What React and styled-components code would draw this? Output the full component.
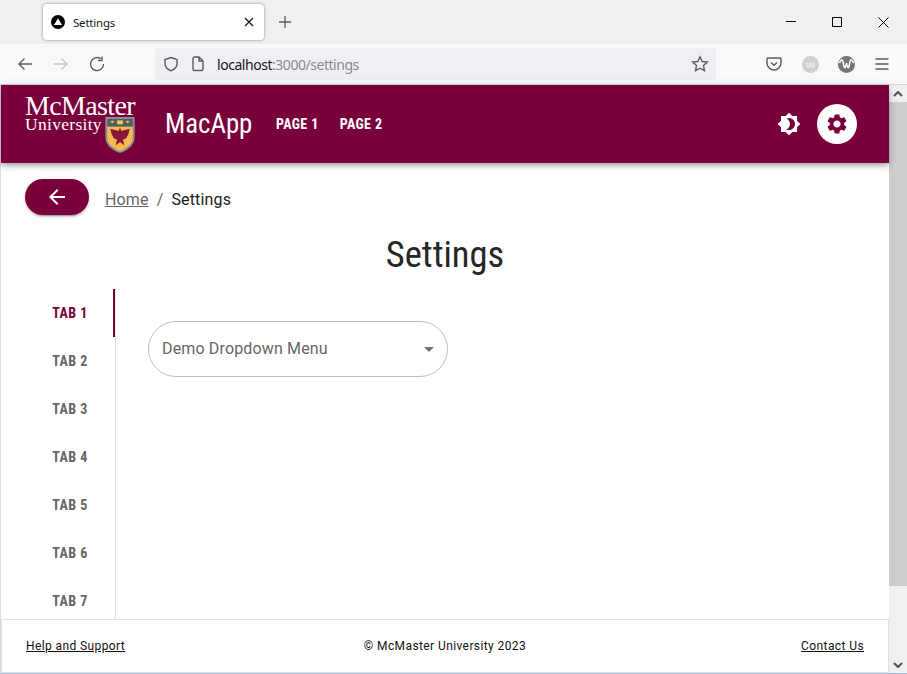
import React from 'react';
import styled, { createGlobalStyle } from 'styled-components';

const GlobalStyle = createGlobalStyle`
  html, body {
    margin: 0;
    padding: 0;
    background: #fff;
    overflow: hidden;
  }
  * {
    box-sizing: border-box;
  }
`;

const maroon = '#7a003c';

const Window = styled.div`
  width: 907px;
  height: 674px;
  display: flex;
  flex-direction: column;
  overflow: hidden;
  font-family: Roboto, "Liberation Sans", sans-serif;
`;

/* browser chrome */
const TabStrip = styled.div`
  height: 44px;
  flex: none;
  display: flex;
  align-items: flex-start;
  background: #f0f0f0;
  padding: 4px 0 0 43px;
`;

const BrowserTab = styled.div`
  width: 221px;
  height: 36px;
  display: flex;
  align-items: center;
  padding: 0 10px 0 8px;
  background: #fff;
  border-radius: 4px;
  box-shadow: 0 0 3px rgba(0, 0, 0, 0.45);
`;

const TabTitle = styled.span`
  flex: 1;
  margin-left: 8px;
  font: 11.5px "Noto Sans", "Liberation Sans", sans-serif;
  letter-spacing: -0.2px;
  color: #15141a;
`;

const NewTab = styled.div`
  width: 14px;
  height: 14px;
  margin: 11px 0 0 14px;
  display: flex;
`;

const WindowControls = styled.div`
  margin-left: auto;
  display: flex;
  padding-top: 13px;
  padding-right: 18px;
  gap: 36px;
`;

const NavBar = styled.div`
  height: 41px;
  flex: none;
  display: flex;
  align-items: center;
  padding: 0 16px;
  background: #f9f9fb;
  border-bottom: 1px solid #d4d4d8;
`;

const NavButton = styled.div`
  width: 18px;
  height: 18px;
  margin-right: ${p => p.$gap ?? 18}px;
  display: flex;
  align-items: center;
  justify-content: center;
  flex: none;
`;

const UrlBar = styled.div`
  width: 561px;
  height: 32px;
  margin: 0 49px;
  flex: none;
  display: flex;
  align-items: center;
  padding: 0 7px 0 8px;
  background: #f0f0f4;
  border-radius: 4px;
`;

const UrlPageIcon = styled.span`
  display: flex;
  margin-left: 11px;
`;

const UrlText = styled.span`
  margin-left: 11px;
  flex: 1;
  font: 14px "Noto Sans", "Liberation Sans", sans-serif;
  letter-spacing: -0.46px;
  color: #15141a;
`;

const UrlRest = styled.span`
  color: #8a8a90;
`;

/* page */
const PageArea = styled.div`
  flex: 1;
  min-height: 0;
  display: flex;
`;

const Page = styled.div`
  flex: 1;
  min-width: 0;
  display: flex;
  flex-direction: column;
  border-left: 1px solid #dcdcdc;
  background: #fff;
`;

const Scrollbar = styled.div`
  width: 18px;
  flex: none;
  display: flex;
  flex-direction: column;
  background: #f0f0f0;
`;

const ScrollArrow = styled.div`
  height: 17px;
  flex: none;
  display: flex;
  align-items: center;
  justify-content: center;
`;

const ScrollThumb = styled.div`
  height: 484px;
  flex: none;
  background: #cdcdcd;
`;

const ScrollTrack = styled.div`
  flex: 1;
`;

const Header = styled.header`
  position: relative;
  z-index: 2;
  height: 78px;
  flex: none;
  display: flex;
  align-items: center;
  padding: 0 32px 0 24px;
  background: ${maroon};
  box-shadow: 0 2px 4px -1px rgba(0, 0, 0, 0.2), 0 4px 5px rgba(0, 0, 0, 0.14), 0 1px 10px rgba(0, 0, 0, 0.12);
`;

const Logo = styled.div`
  width: 110px;
  height: 58px;
  flex: none;
  display: flex;
  flex-direction: column;
  color: #fff;
  font-family: "Liberation Serif", serif;
`;

const LogoTop = styled.div`
  height: 21px;
  font-size: 28px;
  line-height: 21px;
  letter-spacing: -0.65px;
  white-space: nowrap;
`;

const LogoBottom = styled.div`
  display: flex;
  justify-content: space-between;
`;

const LogoUniversity = styled.div`
  font-size: 17.5px;
  line-height: 16px;
  letter-spacing: 0.3px;
`;

const CrestSvg = styled.svg`
  flex: none;
  margin-top: 1px;
`;

const AppName = styled.div`
  margin-left: 30px;
  width: 87px;
  font-size: 26.8px;
  line-height: 32px;
  font-stretch: 75%;
  color: #fff;
  white-space: nowrap;
`;

const HeaderLinks = styled.nav`
  margin-left: 24px;
  display: flex;
  gap: 21px;
`;

const HeaderLink = styled.span`
  font-size: 14px;
  font-weight: 700;
  font-stretch: 75%;
  letter-spacing: 0.4px;
  color: #fff;
`;

const HeaderActions = styled.div`
  margin-left: auto;
  display: flex;
  align-items: center;
  gap: 16px;
`;

const ThemeButton = styled.div`
  width: 24px;
  height: 24px;
  display: flex;
`;

const SettingsButton = styled.div`
  width: 40px;
  height: 40px;
  border-radius: 50%;
  background: #fff;
  display: flex;
  align-items: center;
  justify-content: center;
`;

const CrumbRow = styled.div`
  flex: none;
  display: flex;
  align-items: center;
  padding: 16px 0 0 24px;
`;

const BackButton = styled.div`
  width: 64px;
  height: 36px;
  border-radius: 18px;
  background: ${maroon};
  display: flex;
  align-items: center;
  justify-content: center;
  box-shadow: 0 3px 1px -2px rgba(0, 0, 0, 0.2), 0 2px 2px rgba(0, 0, 0, 0.14), 0 1px 5px rgba(0, 0, 0, 0.12);
`;

const Crumbs = styled.div`
  margin: 6px 0 0 16px;
  display: flex;
  font-size: 16px;
  line-height: 24px;
  letter-spacing: 0.15px;
  color: #666;
`;

const CrumbLink = styled.span`
  text-decoration: underline;
`;

const CrumbSep = styled.span`
  margin: 0 8px;
`;

const CrumbCurrent = styled.span`
  color: #222;
`;

const Title = styled.h1`
  margin: 17px 0 0;
  flex: none;
  height: 57px;
  text-align: center;
  font-size: 36.5px;
  line-height: 46px;
  font-weight: 400;
  font-stretch: 75%;
  color: #262626;
`;

const Body = styled.div`
  flex: 1;
  min-height: 0;
  overflow: hidden;
  display: flex;
  padding-left: 24px;
`;

const TabList = styled.div`
  width: 91px;
  flex: none;
  display: flex;
  flex-direction: column;
  border-right: 1px solid #e0e0e0;
`;

const TabItem = styled.div`
  height: 48px;
  flex: none;
  display: flex;
  align-items: center;
  justify-content: center;
  padding-left: 2px;
  font-size: 14px;
  font-weight: 700;
  font-stretch: 75%;
  letter-spacing: 0.4px;
  color: ${p => (p.$active ? maroon : '#666')};
  border-right: 2px solid ${p => (p.$active ? maroon : 'transparent')};
`;

const TabPanel = styled.div`
  padding: 32px;
`;

const Dropdown = styled.div`
  width: 300px;
  height: 56px;
  display: flex;
  align-items: center;
  justify-content: space-between;
  padding: 0 6px 0 13px;
  border: 1px solid #bdbdbd;
  border-radius: 28px;
  font-size: 16px;
  letter-spacing: 0.15px;
  color: #666;
`;

const DropdownLabel = styled.span`
  margin-top: -2px;
`;

const Footer = styled.footer`
  height: 54px;
  flex: none;
  display: grid;
  grid-template-columns: 1fr auto 1fr;
  align-items: center;
  padding: 0 24px;
  border: 1px solid #e0e0e0;
  font-size: 12px;
  letter-spacing: 0.4px;
  color: #111;
`;

const FooterLink = styled.span`
  text-decoration: underline;
  justify-self: ${p => (p.$end ? 'end' : 'start')};
`;

const DesktopEdge = styled.div`
  height: 1px;
  flex: none;
  background: #9cc3ea;
`;

const tabs = ['TAB 1', 'TAB 2', 'TAB 3', 'TAB 4', 'TAB 5', 'TAB 6', 'TAB 7'];

const Crest = () => (
  <CrestSvg width="30" height="36" viewBox="0 0 30 37">
    <path d="M0 0H30V21C30 29 23 34 15 37C7 34 0 29 0 21Z" fill="#8d8f91" />
    <path d="M2 2H28V10H2Z" fill="#4f5e5f" />
    <path d="M2 10H28V21C28 28 22 32 15 35C8 32 2 28 2 21Z" fill="#f4b94f" />
    <path d="M5 5L7 3.5L9 5L7 6.5ZM21 5L23 3.5L25 5L23 6.5Z" fill="#f2c45a" />
    <path d="M12 3.5H18V7.5H12Z" fill="#f2c45a" />
    <path d="M15 11L16.5 14.5L19 13.5L25 12L23.5 18L21 22L18 23L19.5 29L15 26L10.5 29L12 23L9 22L6.5 18L5 12L11 13.5L13.5 14.5Z" fill="#8a1538" />
  </CrestSvg>
);

const Glyph = ({ size = 18, box = 18, stroke = '#5b5b66', width = 1.4, fill = 'none', children }) => (
  <svg width={size} height={size} viewBox={`0 0 ${box} ${box}`} fill={fill} stroke={stroke} strokeWidth={width}>
    {children}
  </svg>
);

const App = () => (
  <Window>
    <GlobalStyle />
    <TabStrip>
      <BrowserTab>
        <svg width="14" height="14" viewBox="0 0 14 14">
          <circle cx="7" cy="7" r="7" fill="#000" />
          <path d="M7 3.2L11 10H3Z" fill="#fff" />
        </svg>
        <TabTitle>Settings</TabTitle>
        <Glyph size={10} box={10} stroke="#15141a" width={1.2}>
          <path d="M1 1L9 9M9 1L1 9" />
        </Glyph>
      </BrowserTab>
      <NewTab>
        <Glyph size={14} box={14} width={1.3}>
          <path d="M7 1V13M1 7H13" />
        </Glyph>
      </NewTab>
      <WindowControls>
        <Glyph size={10} box={10} stroke="#000" width={1}>
          <path d="M0 4.5H10" />
        </Glyph>
        <Glyph size={10} box={10} stroke="#000" width={1}>
          <path d="M.5 .5H9.5V9.5H.5Z" />
        </Glyph>
        <Glyph size={11} box={11} stroke="#000" width={1}>
          <path d="M.5 .5L10.5 10.5M10.5 .5L.5 10.5" />
        </Glyph>
      </WindowControls>
    </TabStrip>
    <NavBar>
      <NavButton>
        <Glyph>
          <path d="M16 9H3M8.5 3.5L3 9L8.5 14.5" />
        </Glyph>
      </NavButton>
      <NavButton>
        <Glyph stroke="#c2c2c7">
          <path d="M2 9H15M9.5 3.5L15 9L9.5 14.5" />
        </Glyph>
      </NavButton>
      <NavButton $gap={0}>
        <Glyph>
          <path d="M15.5 9A6.5 6.5 0 1 1 12.8 3.8M14 1.5V5.5H10" />
        </Glyph>
      </NavButton>
      <UrlBar>
        <Glyph size={16} box={16}>
          <path d="M8 1.5L14 3.5V8C14 11.5 11 13.5 8 14.8C5 13.5 2 11.5 2 8V3.5Z" />
        </Glyph>
        <UrlPageIcon>
          <Glyph size={16} box={16}>
            <path d="M3 2.5A1.5 1.5 0 0 1 4.5 1H9L13 5V13A1.5 1.5 0 0 1 11.5 14.5H4.5A1.5 1.5 0 0 1 3 13ZM9 1V5H13" />
          </Glyph>
        </UrlPageIcon>
        <UrlText>
          localhost<UrlRest>:3000/settings</UrlRest>
        </UrlText>
        <Glyph size={18} box={18}>
          <path d="M9 1.8L11.2 6.5L16.3 7.1L12.5 10.6L13.5 15.7L9 13.2L4.5 15.7L5.5 10.6L1.7 7.1L6.8 6.5Z" />
        </Glyph>
      </UrlBar>
      <NavButton>
        <Glyph>
          <path d="M2.5 3H15.5A1 1 0 0 1 16 4V8C16 12 12.5 15 9 15C5.5 15 2 12 2 8V4A1 1 0 0 1 2.5 3ZM6 7.5L9 10.3L12 7.5" />
        </Glyph>
      </NavButton>
      <NavButton>
        <svg width="17" height="17" viewBox="0 0 17 17">
          <circle cx="8.5" cy="8.5" r="8.5" fill="#cfcfcf" />
          <path d="M5 6.5V10C5 11.5 7.5 11.5 7.5 10V6.5M9.5 6.5V10C9.5 11.5 12 11.5 12 10V6.5" fill="none" stroke="#eee" strokeWidth="1.3" />
        </svg>
      </NavButton>
      <NavButton>
        <svg width="17" height="17" viewBox="0 0 17 17">
          <circle cx="8.5" cy="8.5" r="8.5" fill="#757575" />
          <path d="M1.5 7C3.5 2.5 4.5 2.5 5.5 8C6.3 13 7.3 13 8.5 7C9.7 13 10.7 13 11.5 8C12.5 2.5 13.5 2.5 15.5 7" fill="none" stroke="#fff" strokeWidth="1.5" />
        </svg>
      </NavButton>
      <NavButton $gap={0}>
        <Glyph>
          <path d="M2.5 4H15.5M2.5 9H15.5M2.5 14H15.5" />
        </Glyph>
      </NavButton>
    </NavBar>
    <PageArea>
      <Page>
        <Header>
          <Logo>
            <LogoTop>McMaster</LogoTop>
            <LogoBottom>
              <LogoUniversity>University</LogoUniversity>
              <Crest />
            </LogoBottom>
          </Logo>
          <AppName>MacApp</AppName>
          <HeaderLinks>
            <HeaderLink>PAGE 1</HeaderLink>
            <HeaderLink>PAGE 2</HeaderLink>
          </HeaderLinks>
          <HeaderActions>
            <ThemeButton>
              <svg width="24" height="24" viewBox="0 0 24 24" fill="#fff">
                <path d="M20 8.69V4h-4.69L12 .69 8.69 4H4v4.69L.69 12 4 15.31V20h4.69L12 23.31 15.31 20H20v-4.69L23.31 12 20 8.69zM12 18c-.89 0-1.74-.2-2.5-.55C11.56 16.5 13 14.42 13 12s-1.44-4.5-3.5-5.45C10.26 6.2 11.11 6 12 6c3.31 0 6 2.69 6 6s-2.69 6-6 6z" />
              </svg>
            </ThemeButton>
            <SettingsButton>
              <svg width="24" height="24" viewBox="0 0 24 24" fill={maroon}>
                <path d="M19.14 12.94c.04-.3.06-.61.06-.94 0-.32-.02-.64-.07-.94l2.03-1.58c.18-.14.23-.41.12-.61l-1.92-3.32c-.12-.22-.37-.29-.59-.22l-2.39.96c-.5-.38-1.03-.7-1.62-.94l-.36-2.54c-.04-.24-.24-.41-.48-.41h-3.84c-.24 0-.43.17-.47.41l-.36 2.54c-.59.24-1.13.57-1.62.94l-2.39-.96c-.22-.08-.47 0-.59.22L2.74 8.87c-.12.21-.08.47.12.61l2.03 1.58c-.05.3-.09.63-.09.94s.02.64.07.94l-2.03 1.58c-.18.14-.23.41-.12.61l1.92 3.32c.12.22.37.29.59.22l2.39-.96c.5.38 1.03.7 1.62.94l.36 2.54c.05.24.24.41.48.41h3.84c.24 0 .44-.17.47-.41l.36-2.54c.59-.24 1.13-.56 1.62-.94l2.39.96c.22.08.47 0 .59-.22l1.92-3.32c.12-.22.07-.47-.12-.61l-2.01-1.58zM12 15.6c-1.98 0-3.6-1.62-3.6-3.6s1.62-3.6 3.6-3.6 3.6 1.62 3.6 3.6-1.62 3.6-3.6 3.6z" />
              </svg>
            </SettingsButton>
          </HeaderActions>
        </Header>
        <CrumbRow>
          <BackButton>
            <svg width="24" height="24" viewBox="0 0 24 24" fill="#fff">
              <path d="M20 11H7.83l5.59-5.59L12 4l-8 8 8 8 1.41-1.41L7.83 13H20v-2z" />
            </svg>
          </BackButton>
          <Crumbs>
            <CrumbLink>Home</CrumbLink>
            <CrumbSep>/</CrumbSep>
            <CrumbCurrent>Settings</CrumbCurrent>
          </Crumbs>
        </CrumbRow>
        <Title>Settings</Title>
        <Body>
          <TabList>
            {tabs.map((t, i) => (
              <TabItem key={t} $active={i === 0}>{t}</TabItem>
            ))}
          </TabList>
          <TabPanel>
            <Dropdown>
              <DropdownLabel>Demo Dropdown Menu</DropdownLabel>
              <svg width="24" height="24" viewBox="0 0 24 24" fill="#757575">
                <path d="M7 10l5 5 5-5z" />
              </svg>
            </Dropdown>
          </TabPanel>
        </Body>
        <Footer>
          <FooterLink>Help and Support</FooterLink>
          <span>© McMaster University 2023</span>
          <FooterLink $end>Contact Us</FooterLink>
        </Footer>
      </Page>
      <Scrollbar>
        <ScrollArrow>
          <svg width="10" height="6" viewBox="0 0 10 6" fill="none" stroke="#505050" strokeWidth="2">
            <path d="M1 5L5 1L9 5" />
          </svg>
        </ScrollArrow>
        <ScrollThumb />
        <ScrollTrack />
        <ScrollArrow>
          <svg width="10" height="6" viewBox="0 0 10 6" fill="none" stroke="#505050" strokeWidth="2">
            <path d="M1 1L5 5L9 1" />
          </svg>
        </ScrollArrow>
      </Scrollbar>
    </PageArea>
    <DesktopEdge />
  </Window>
);

export default App;
